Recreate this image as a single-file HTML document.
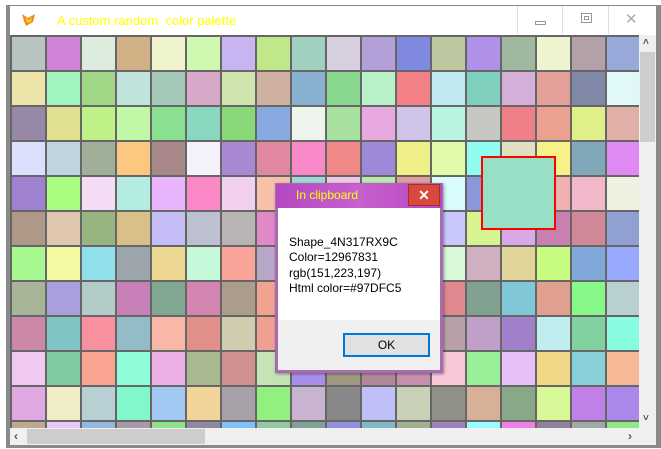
<!DOCTYPE html>
<html><head><meta charset="utf-8"><style>
*{margin:0;padding:0;box-sizing:border-box}
body{width:661px;height:449px;background:#fff;position:relative;overflow:hidden;font-family:"Liberation Sans",sans-serif}
.abs{position:absolute}
#frame{left:6px;top:5px;width:655px;height:443px;background:#8a8a8a}
#title{left:10px;top:6px;width:646px;height:29px;background:#fff}
#grid{left:10px;top:35px;width:629px;height:393px;background:#666;overflow:hidden}
.c{position:absolute;width:33px;height:33px}
#vs{left:639px;top:35px;width:17px;height:393px;background:#f0f0f0}
#hs{left:10px;top:428px;width:646px;height:17px;background:#f0f0f0}
.tb{font-size:12px;color:#777}
</style></head><body>
<div class="abs" id="frame"></div>
<div class="abs" id="title">
 <svg class="abs" style="left:10px;top:5px" width="18" height="18" viewBox="0 0 18 18"><path d="M2 3 L8 7 L15 3 L13 11 L6 15 L4 10 Z" fill="#f08a20"/><path d="M5 6 L9 9 L12 6 L11 11 L7 12Z" fill="#fcc830"/></svg>
 <div class="abs" style="left:47px;top:7px;font-size:13px;color:#ffff00;white-space:pre">A custom random  color palette</div>
 <div class="abs" style="left:507px;top:0;width:46px;height:28px;border-left:1px solid #ddd;border-right:1px solid #ddd"><div class="abs" style="left:17px;top:15px;width:11px;height:4px;border:1px solid #999"></div></div>
 <div class="abs" style="left:553px;top:0;width:46px;height:28px;border-right:1px solid #ddd"><div class="abs" style="left:18px;top:7px;width:11px;height:10px;border:1px solid #999"></div><div class="abs" style="left:21px;top:10px;width:5px;height:4px;border:1px solid #999"></div></div>
 <div class="abs" style="left:615px;top:4px;font-size:15px;color:#aaa">✕</div>
</div>
<div class="abs" id="grid"></div>
<div class="abs" id="vs">
 <div class="abs" style="left:4px;top:2px;font-size:10px;color:#555;font-weight:bold">&#x2C4;</div>
 <div class="abs" style="left:1px;top:17px;width:15px;height:90px;background:#cdcdcd"></div>
 <div class="abs" style="left:4px;top:378px;font-size:10px;color:#555;font-weight:bold">&#x2C5;</div>
</div>
<div class="abs" id="hs">
 <div class="abs" style="left:4px;top:1px;font-size:12px;color:#555;font-weight:bold">‹</div>
 <div class="abs" style="left:17px;top:1px;width:178px;height:15px;background:#cdcdcd"></div>
 <div class="abs" style="left:618px;top:1px;font-size:12px;color:#555;font-weight:bold">›</div>
</div>
<div class="abs" style="left:481px;top:156px;width:75px;height:74px;border:2px solid #f00;background:#97dfc5"></div>
<div class="abs" style="left:275px;top:183px;width:168px;height:190px;background:#a86ab0;box-shadow:1px 1px 3px rgba(0,0,0,.4)">
 <div class="abs" style="left:1px;top:1px;width:166px;height:24px;background:linear-gradient(90deg,#b448c0,#c860d0 50%,#b448c0)"></div>
 <div class="abs" style="left:21px;top:5px;font-size:12px;color:#ffff00">In clipboard</div>
 <div class="abs" style="left:133px;top:1px;width:32px;height:22px;background:#d8483c;border:1px solid #a03028;color:#fff;font-weight:bold;font-size:14px;text-align:center;line-height:20px">✕</div>
 <div class="abs" style="left:3px;top:25px;width:162px;height:112px;background:#fff"></div>
 <div class="abs" style="left:3px;top:137px;width:162px;height:50px;background:#f0f0f0"></div>
 <div class="abs" style="left:14px;top:52px;font-size:12px;line-height:15.3px;color:#000">Shape_4N317RX9C<br>Color=12967831<br>rgb(151,223,197)<br>Html color=#97DFC5</div>
 <div class="abs" style="left:68px;top:150px;width:87px;height:24px;border:2px solid #0078d7;background:#e1e1e1;font-size:12px;text-align:center;line-height:20px">OK</div>
</div>
<script>
var R=[
"b8c4c0 d084d8 dcecdc d0b084 f0f4cc d0f8b0 c8b4f0 c0e888 a0d0c0 d8d0e0 b4a0d8 8088e0 bcc8a0 b090e8 a0b8a0 ecf4d0 b4a0a8 98a8d8",
"ece4a8 a0f4c0 a0d888 c0e4dc a4c8b8 d8a8c8 d0e4b0 d0b0a0 88b0d0 88d890 b8f0c8 f48088 c0e8f0 80d0c0 d4b0d8 e4a098 8088a8 e0f8f8",
"9888a8 e0e090 c0f088 c0f8a8 88e090 88d8c0 88d878 88a8e0 ecf4ec a8e0a0 e8a8e0 d0c4e8 b8f4e0 c4c8c0 f08088 eca090 e0f088 e0b0a8",
"dce0fc c0d4e0 a0b098 fcc880 a88888 f4f0fc a888d0 e088a0 f888c8 f08888 a088d8 f0f088 e0fca8 90fcf0 e0e0c0 f8f088 80a8b8 e088f4",
"a080d0 a8fc80 f4dcf4 b4ece4 e8b4fc fc88c8 f0d0ec f8c0a8 a0d8d8 f0c8e8 b8e8b0 e0a098 d8fcfc 8898d8 e8d0a0 f0b0b0 f0b8c8 f0f0e0",
"b09888 e0c8b0 98b480 d8c088 c4bcf4 bcc0d0 b8b4b4 e088c8 c0b0d8 b0d0a0 d8a8b8 a8c0e0 c8c8fc d8f490 d8a8e8 c880b0 d08898 90a0d0",
"a8f890 f4f8a0 90e0ec 9ca4ac ecd890 c4f8d8 f8a498 b8a8c8 a0c8c0 e0d0a8 c0b8e0 b0e0b0 d8f8d8 d0b0c0 e0d498 c8fc80 80a8d8 98a8fc",
"a8b498 a8a0dc b4ccc8 c880b8 80a890 d484b0 ac9c8c f0a490 d0b8a0 a0c8e8 c8e0a0 e8b0c0 e08890 80a090 80c8d8 e0a090 88f888 b8d0d0",
"cc88a8 80c4c4 f890a0 94bcc8 f8b8a8 e09088 d0ccb0 f0a090 b8e0c8 a8a0d0 e0c8a0 c0d0f0 b8a0a8 c0a0c8 a080c8 c0eef0 80d0a0 88fce0",
"f0c8f0 80cca0 f8a490 90fcd8 ecb0e4 a8b890 d09090 c4e4b8 a890e8 a09880 b08898 c890b0 f8c8d8 98f098 e8c0f8 f0d888 88d0d8 f8b898",
"e0a8e0 f0ecc8 b8d0d4 80f8cc a0c8f0 f0d498 a8a0a8 90f080 c8b4d0 888888 c0c0f8 c8d0b8 909088 d8b098 88a888 d8f898 c080e8 a888e8",
"c0a890 e8c8f8 90b8e0 a898a8 90e088 9088a0 80c0f8 90c8a0 80a098 9090e0 80b8c8 a0b090 a080b8 98fcfc f080e8 908098 a0a8a8 90e888"];
var g=document.getElementById('grid'),h='';
R.forEach(function(r,i){r.split(' ').forEach(function(c,j){h+='<div class="c" style="left:'+(2+35*j)+'px;top:'+(2+35*i)+'px;background:#'+c+'"></div>';});});
g.innerHTML=h;
</script>
</body></html>
